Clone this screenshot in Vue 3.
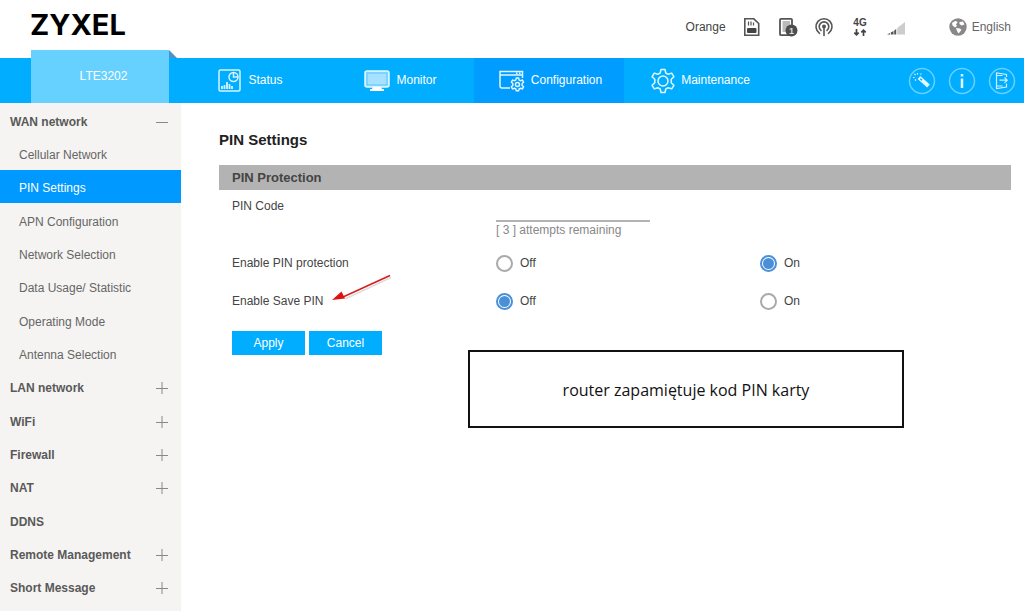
<script setup>
import { ref } from 'vue'

const tabs = [
  { id: 'status', label: 'Status' },
  { id: 'monitor', label: 'Monitor' },
  { id: 'config', label: 'Configuration', active: true },
  { id: 'maintenance', label: 'Maintenance' },
]

const wanItems = [
  'Cellular Network',
  'PIN Settings',
  'APN Configuration',
  'Network Selection',
  'Data Usage/ Statistic',
  'Operating Mode',
  'Antenna Selection',
]

const groups = [
  { label: 'LAN network', more: true },
  { label: 'WiFi', more: true },
  { label: 'Firewall', more: true },
  { label: 'NAT', more: true },
  { label: 'DDNS', more: false },
  { label: 'Remote Management', more: true },
  { label: 'Short Message', more: true },
]

const pin = ref('')
const protection = ref('on')
const savePin = ref('off')
</script>

<template>
  <div class="page">
    <header class="top">
      <a class="logo" href="#">ZYXEL</a>
      <div class="state">
        <span class="operator">Orange</span>
        <svg width="20" height="20" viewBox="0 0 20 20" fill="none" stroke="#555" stroke-width="1.600">
          <path d="M2.800 1.800h9L16.700 6.500v11.700H2.800z" />
          <rect x="5" y="11" width="9.500" height="5" rx="1" fill="#444" stroke="none" />
          <path d="M6.500 4.500v4M9 4.500v4M11.500 5.500v3" stroke-width="1.200" />
        </svg>
        <svg width="20" height="20" viewBox="0 0 20 20">
          <rect x="2" y="1.800" width="12" height="16.400" rx="1" fill="#fff" stroke="#555" stroke-width="1.800" />
          <rect x="4.500" y="4" width="7.500" height="11" fill="#bbb" />
          <circle cx="13.500" cy="13.500" r="6" fill="#4d4d4d" />
          <text x="13.500" y="17" text-anchor="middle" font-size="9" font-weight="700" fill="#ddd">1</text>
        </svg>
        <svg width="20" height="20" viewBox="0 0 20 20" fill="none" stroke="#555" stroke-width="1.600" stroke-linecap="round">
          <path d="M5.500 16.300A8 8 0 1 1 14.500 16.300" />
          <path d="M7 13.400A4.800 4.800 0 1 1 13 13.400" />
          <circle cx="10" cy="9.500" r="2" fill="#555" stroke="none" />
          <path d="M10 10v8.500" />
        </svg>
        <svg width="20" height="20" viewBox="0 0 20 20">
          <text x="10" y="9" text-anchor="middle" font-size="10" font-weight="700" fill="#444">4G</text>
          <path d="M6.500 12v6M4.300 15.700l2.200 2.200 2.200-2.200M13.500 19v-6M11.300 15.300l2.200-2.200 2.200 2.200" fill="none" stroke="#444" stroke-width="1.700" />
        </svg>
        <svg width="20" height="20" viewBox="0 0 20 20">
          <path d="M1 17.500h3v-1.500z" fill="#555" />
          <path d="M4.800 17.500v-2l2.700-1.500v3.500zM8.200 17.500v-4L10.200 12v5.500z" fill="#555" />
          <path d="M11.200 17.500V11L19 5v12.500z" fill="#ccc" />
        </svg>
      </div>
      <button class="lang" type="button">
        <svg width="18" height="18" viewBox="0 0 18 18">
          <circle cx="9" cy="9" r="8.700" fill="#888" />
          <path d="M3 5l3-2 2 .5.500 1L7 6.500 8 8 6 9.500 3.500 7.500zM10.500 4l3.500-.5 1.500 3-3 1-2-1.500zM7 10l4 .5 1.500 1.500-3 3.500-1.500-2.500z" fill="#fff" />
        </svg>
        English
      </button>
    </header>

    <div class="bar">
      <div class="model">LTE3202</div>
      <nav class="tabs">
        <a v-for="t in tabs" :key="t.id" href="#" class="tab" :class="{ active: t.active }">
          <svg v-if="t.id === 'status'" width="24" height="24" viewBox="0 0 24 24" fill="none" stroke="#d8f4ff" stroke-width="1.500">
            <rect x="1" y="1" width="21" height="21" rx="1.500" />
            <circle cx="15.500" cy="8" r="4.500" />
            <path d="M15.500 3.500V8H20" />
            <path d="M4 20v-3M6.500 20v-4M9 20v-7M11.500 20v-5M14 20v-3" stroke-width="1.800" />
          </svg>
          <svg v-else-if="t.id === 'monitor'" width="26" height="24" viewBox="0 0 26 24">
            <rect x="1" y="2" width="24" height="16" rx="2" fill="#a6e2ff" stroke="#e3f7ff" stroke-width="1.500" />
            <rect x="3" y="4" width="20" height="12" fill="none" stroke="#55c8ff" stroke-width="1" />
            <path d="M9 18h8l1 2h2v2H6v-2h2z" fill="#fff" />
          </svg>
          <svg v-else-if="t.id === 'config'" width="26" height="24" viewBox="0 0 26 24" fill="none" stroke="#e3f7ff" stroke-width="1.500">
            <path d="M11 19H3a2 2 0 0 1-2-2V2.500h22.500V9M1 6h22.500M17 4.200h1.500M20 4.200h1.500" />
            <g transform="translate(11.500 8.500) scale(.58)" stroke-width="2.500">
              <path d="M10 1h4l1 3.500 2 1 3.500-1 2 3.500-2.500 2.500v3l2.500 2.500-2 3.500-3.500-1-2 1-1 3.500h-4l-1-3.500-2-1-3.500 1-2-3.500L4 13.500v-3L1.500 8l2-3.500 3.500 1 2-1z" />
              <circle cx="12" cy="12" r="3.500" />
            </g>
          </svg>
          <svg v-else width="24" height="26" viewBox="0 0 24 26" fill="none" stroke="#e3f7ff" stroke-width="1.500" stroke-linejoin="round">
            <path d="M10 1.500h4l.8 3.500 2.400 1.300 3.500-1.200 2.200 3.600-2.700 2.600v3.400l2.700 2.600-2.200 3.600-3.500-1.200-2.400 1.300-.8 3.500h-4L9.200 21l-2.400-1.300-3.500 1.200-2.200-3.600 2.700-2.600v-3.400L1.100 8.700l2.200-3.600 3.500 1.200L9.200 5z" />
            <circle cx="12" cy="13" r="5" />
          </svg>
          <span>{{ t.label }}</span>
        </a>
      </nav>
      <div class="tools">
        <button type="button" aria-label="Wizard">
          <svg width="28" height="28" viewBox="0 0 28 28" fill="none" stroke="#e3f7ff">
            <circle cx="14" cy="14" r="12.500" stroke="#66d0ff" stroke-width="1.500" />
            <path d="M11 10.500l9.500 8.500" stroke-width="4" />
            <path d="M12.300 11.700l1.700 1.500" stroke="#00adff" stroke-width="1.500" />
            <path d="M9.500 6v1.500M6.500 7l1 1M5 10.500h1.500M7 13.500l1-1M12.500 7.500l.8-.8" stroke-width="1.200" />
          </svg>
        </button>
        <button type="button" aria-label="Information">
          <svg width="28" height="28" viewBox="0 0 28 28" fill="none" stroke="#e3f7ff">
            <circle cx="14" cy="14" r="12.500" stroke="#66d0ff" stroke-width="1.500" />
            <path d="M14 7v2.500M14 11.500V21" stroke-width="2.500" />
          </svg>
        </button>
        <button type="button" aria-label="Log out">
          <svg width="28" height="28" viewBox="0 0 28 28" fill="none" stroke="#d0f1ff" stroke-width="1.200">
            <circle cx="14" cy="14" r="12.500" stroke="#66d0ff" stroke-width="1.500" />
            <path d="M18.500 10V7.500L8.500 6v15.500l10-1.500v-3.500M8.500 8.500h6M8.500 19h6M11.500 13.200H19M16.500 10.500l2.700 2.700-2.700 2.700" />
          </svg>
        </button>
      </div>
    </div>

    <div class="body">
      <nav class="side">
        <button type="button" class="group">
          WAN network
          <svg width="12" height="12" viewBox="0 0 12 12" stroke="#888"><path d="M0 6.500h12" /></svg>
        </button>
        <a v-for="w in wanItems" :key="w" href="#" class="sub" :class="{ current: w === 'PIN Settings' }">{{ w }}</a>
        <button v-for="g in groups" :key="g.label" type="button" class="group">
          {{ g.label }}
          <svg v-if="g.more" width="12" height="12" viewBox="0 0 12 12" stroke="#888"><path d="M0 6.500h12M6 0v12" /></svg>
        </button>
      </nav>

      <main class="content">
        <h1>PIN Settings</h1>
        <h2>PIN Protection</h2>
        <form class="form" @submit.prevent>
          <div class="row code">
            <label for="pin">PIN Code</label>
            <div class="field">
              <input id="pin" v-model="pin" type="password" />
              <p>[ 3 ] attempts remaining</p>
            </div>
          </div>
          <div class="row" role="radiogroup" aria-labelledby="protect">
            <span id="protect">Enable PIN protection</span>
            <label class="choice"><input v-model="protection" type="radio" name="protect" value="off" />Off</label>
            <label class="choice"><input v-model="protection" type="radio" name="protect" value="on" />On</label>
          </div>
          <div class="row" role="radiogroup" aria-labelledby="save">
            <span id="save" class="marked">
              Enable Save PIN
              <svg class="arrow" width="64" height="34" viewBox="0 0 64 34">
                <path d="M60 6.500L14 28" stroke="#ddd" stroke-width="1.500" />
                <path d="M59 4.500L12 26" stroke="#d91c1c" stroke-width="1.500" />
                <path d="M1 29L10.500 20.500 14 27.500z" fill="#e01010" />
              </svg>
            </span>
            <label class="choice"><input v-model="savePin" type="radio" name="save" value="off" />Off</label>
            <label class="choice"><input v-model="savePin" type="radio" name="save" value="on" />On</label>
          </div>
          <div class="actions">
            <button type="submit">Apply</button>
            <button type="button">Cancel</button>
          </div>
        </form>
        <aside class="note">router zapamiętuje kod PIN karty</aside>
      </main>
    </div>
  </div>
</template>

<style>
body {
  margin: 0;
  background: #fff;
}
</style>

<style scoped>
.page {
  display: flex;
  flex-direction: column;
  min-height: 100vh;
  font: 12px/16px "Liberation Sans", Arial, sans-serif;
  color: #444;
}
.page * {
  box-sizing: border-box;
}
button {
  border: 0;
  padding: 0;
  background: none;
  font: inherit;
  color: inherit;
  cursor: pointer;
}
a {
  text-decoration: none;
  color: inherit;
}
svg {
  display: block;
  flex: none;
}
.top {
  display: flex;
  align-items: center;
  height: 58px;
  padding: 0 13px 4px 30px;
}
.logo {
  margin-right: auto;
  padding-bottom: 4px;
  font: 700 29px/32px Inter, "Noto Sans", sans-serif;
  color: #000;
}
.state {
  display: flex;
  align-items: center;
  gap: 16px;
}
.lang {
  display: flex;
  align-items: center;
  gap: 5px;
  margin-left: 43px;
  color: #666;
}
.bar {
  display: flex;
  align-items: center;
  height: 45px;
  background: #00adff;
  color: #fff;
}
.model {
  position: relative;
  display: flex;
  align-items: center;
  justify-content: center;
  width: 138px;
  height: 53px;
  margin: -8px 5px 0 31px;
  padding: 0 0 2px 7px;
  background: #66d0ff;
}
.model::after {
  content: "";
  position: absolute;
  left: 100%;
  top: 0;
  width: 8px;
  height: 8px;
  background: #4c94c6;
  clip-path: polygon(0 0, 100% 100%, 0 100%);
}
.tabs {
  display: flex;
  align-self: stretch;
}
.tab {
  display: flex;
  align-items: center;
  justify-content: center;
  gap: 6px;
  width: 150px;
  padding-left: 3px;
}
.tab span {
  padding-bottom: 2px;
}
.tab.active {
  background: #009cff;
}
.tools {
  display: flex;
  gap: 12px;
  margin: 0 8px 0 auto;
}
.body {
  display: flex;
  flex: 1;
}
.side {
  display: flex;
  flex-direction: column;
  width: 181px;
  padding-bottom: 8px;
  background: #f5f4f2;
  color: #666;
}
.group,
.sub {
  display: flex;
  flex: 1 0 33px;
  align-items: center;
  padding: 4px 13px 0 10px;
}
.group {
  justify-content: space-between;
  font-weight: 700;
  color: #595959;
}
.sub {
  padding-left: 19px;
}
.sub.current {
  background: #0099ff;
  color: #fff;
}
.content {
  position: relative;
  flex: 1;
  padding: 27px 13px 0 38px;
}
h1 {
  margin: 0 0 15px;
  font-size: 15px;
  line-height: 20px;
  color: #222;
}
h2 {
  margin: 0;
  padding: 0 13px;
  font-size: 13px;
  line-height: 25px;
  background: #b3b3b3;
}
.row {
  display: grid;
  grid-template-columns: repeat(3, 1fr);
  align-items: center;
  height: 38px;
}
.row > * {
  padding-left: 13px;
}
.row.code {
  align-items: start;
  height: 54px;
  padding-top: 8px;
}
.field input {
  display: block;
  width: 154px;
  height: 24px;
  padding: 0;
  border: 0;
  border-bottom: 2px solid #b3b3b3;
  background: none;
  outline: 0;
}
.field p {
  margin: 0;
  color: #888;
}
.choice {
  display: flex;
  align-items: center;
  gap: 7px;
}
.choice input {
  display: grid;
  place-items: center;
  width: 17px;
  height: 17px;
  margin: 0;
  appearance: none;
  border: 2px solid #aaa;
  border-radius: 50%;
}
.choice input:checked {
  border-color: #4a90d9;
}
.choice input:checked::before {
  content: "";
  width: 11px;
  height: 11px;
  border-radius: 50%;
  background: #4a90d9;
}
.marked {
  position: relative;
}
.arrow {
  position: absolute;
  left: 112px;
  top: -22px;
}
.actions {
  display: flex;
  gap: 4px;
  padding: 11px 13px;
}
.actions button {
  width: 73px;
  height: 24px;
  background: #00adff;
  color: #fff;
}
.note {
  position: absolute;
  left: 287px;
  top: 247px;
  display: flex;
  align-items: center;
  justify-content: center;
  width: 436px;
  height: 78px;
  padding-top: 2px;
  border: 2px solid #111;
  background: #fff;
  font: 16px/24px "Open Sans", "Noto Sans", sans-serif;
  color: #111;
}
</style>
